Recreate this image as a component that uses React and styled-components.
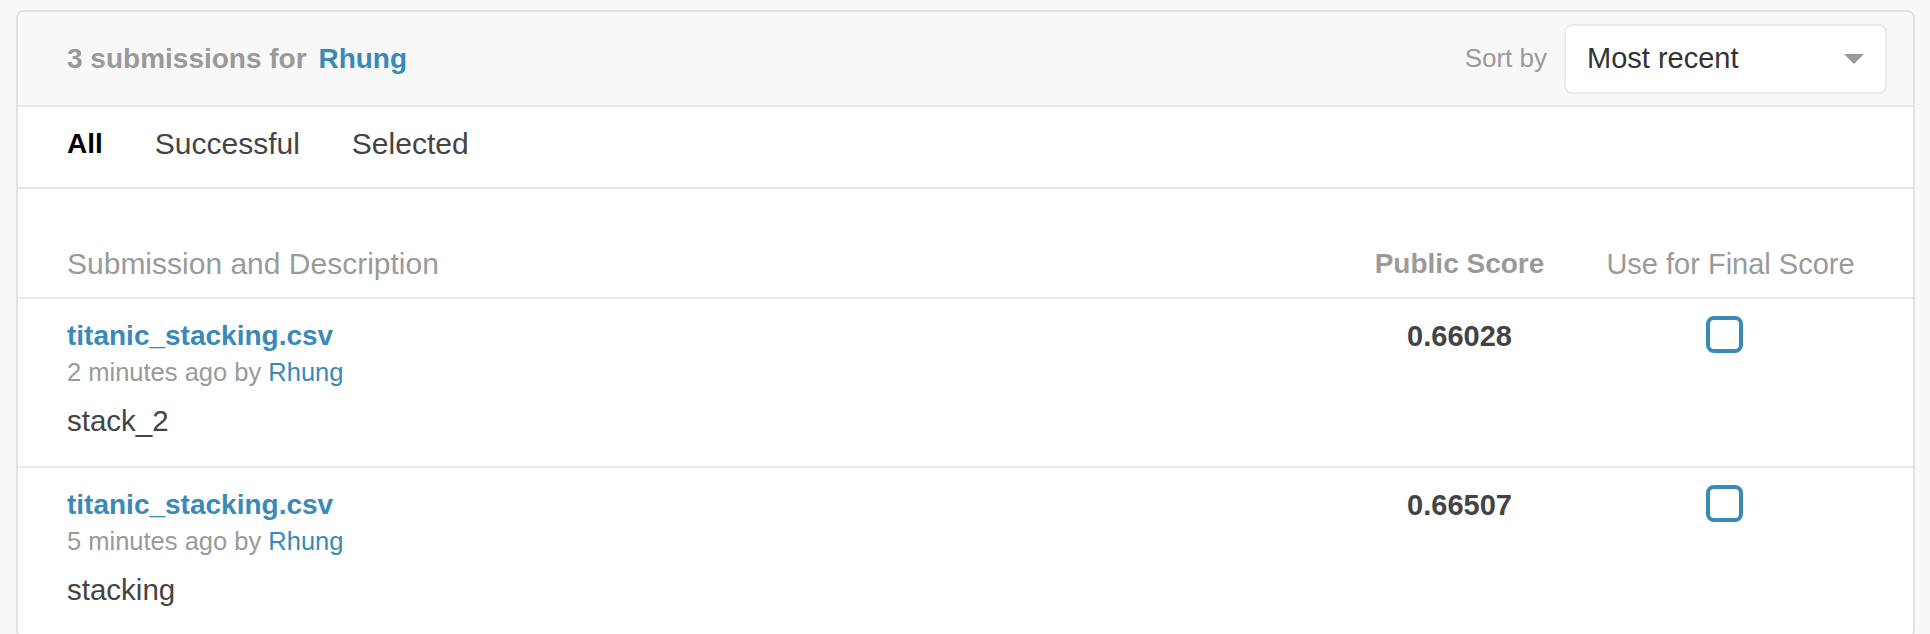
import React from "react";
import styled, { createGlobalStyle } from "styled-components";

const GlobalStyle = createGlobalStyle`
  html, body {
    margin: 0;
    padding: 0;
    background: #f7f8fa;
    overflow: hidden;
    font-family: "Liberation Sans", Arial, sans-serif;
  }
`;

const Card = styled.div`
  margin: 10px 15px 0 16px;
  border: 2px solid #e2e2e2;
  border-radius: 8px;
  background: #fff;
  overflow: hidden;
`;

const Header = styled.div`
  height: 93px;
  display: flex;
  align-items: center;
  justify-content: space-between;
  padding: 0 26px 0 49px;
  background: #f8f8f9;
  border-bottom: 2px solid #e8e8e8;
`;

const Title = styled.div`
  font-size: 28px;
  font-weight: 700;
  color: #9a9a9a;
`;

const Link = styled.a`
  color: #3a89b9;
  font-weight: ${(p) => (p.$regular ? 400 : 700)};
  text-decoration: none;
  margin-left: ${(p) => p.$gap || 0}px;
`;

const SortGroup = styled.div`
  display: flex;
  align-items: center;
  gap: 17px;
`;

const SortLabel = styled.span`
  font-size: 26px;
  color: #9a9a9a;
`;

const Select = styled.div`
  box-sizing: border-box;
  width: 323px;
  height: 70px;
  border: 2px solid #ebebeb;
  border-radius: 8px;
  background: #fff;
  display: flex;
  align-items: center;
  justify-content: space-between;
  padding: 0 21px;
  font-size: 29px;
  color: #333;
`;

const Caret = styled.span`
  width: 0;
  height: 0;
  border-left: 10px solid transparent;
  border-right: 10px solid transparent;
  border-top: 10px solid #999;
`;

const Tabs = styled.div`
  display: flex;
  gap: 52px;
  padding: 19px 49px 25px;
  border-bottom: 2px solid #e6e6e6;
`;

const Tab = styled.span`
  font-size: ${(p) => (p.$active ? 28 : 30)}px;
  line-height: 36px;
  font-weight: ${(p) => (p.$active ? 700 : 400)};
  color: ${(p) => (p.$active ? "#000" : "#444")};
`;

const Grid = styled.div`
  display: grid;
  grid-template-columns: 1fr 171px 251px;
  column-gap: 60px;
  padding: ${(p) => p.$pad};
  border-bottom: 2px solid #ebebeb;
  align-items: ${(p) => p.$align || "start"};
`;

const HeadCell = styled.div`
  font-size: ${(p) => p.$size || 29}px;
  font-weight: ${(p) => (p.$bold ? 700 : 400)};
  line-height: 36px;
  color: #9a9a9a;
  text-align: ${(p) => p.$align || "left"};
`;

const NameCell = styled.div`
  display: flex;
  flex-direction: column;
`;

const FileLink = styled.a`
  font-size: 28px;
  font-weight: 700;
  line-height: 34px;
  color: #3a89b9;
  text-decoration: none;
`;

const Meta = styled.div`
  margin-top: 4px;
  font-size: 25.5px;
  line-height: 30px;
  color: #9a9a9a;
`;

const Description = styled.div`
  margin-top: 16px;
  font-size: 29.5px;
  line-height: 36px;
  color: #444;
`;

const Score = styled.div`
  font-size: 29px;
  font-weight: 700;
  line-height: 34px;
  color: #444;
  text-align: center;
`;

const CheckCell = styled.div`
  display: flex;
  justify-content: center;
  padding-right: 12px;
`;

const Checkbox = styled.span`
  display: block;
  width: 37px;
  height: 37px;
  box-sizing: border-box;
  margin-top: -3px;
  border: 4px solid #3a89b9;
  border-radius: 8px;
  background: #fff;
`;

const submissions = [
  { file: "titanic_stacking.csv", when: "2 minutes ago", desc: "stack_2", score: "0.66028" },
  { file: "titanic_stacking.csv", when: "5 minutes ago", desc: "stacking", score: "0.66507" },
];

export default function App() {
  return (
    <>
      <GlobalStyle />
      <Card>
        <Header>
          <Title>
            3 submissions for <Link $gap={4}>Rhung</Link>
          </Title>
          <SortGroup>
            <SortLabel>Sort by</SortLabel>
            <Select>
              Most recent
              <Caret />
            </Select>
          </SortGroup>
        </Header>
        <Tabs>
          <Tab $active>All</Tab>
          <Tab>Successful</Tab>
          <Tab>Selected</Tab>
        </Tabs>
        <Grid $pad="57px 57px 15px 49px" $align="end">
          <HeadCell $size={30}>Submission and Description</HeadCell>
          <HeadCell $size={28} $bold $align="center">Public Score</HeadCell>
          <HeadCell $align="center">Use for Final Score</HeadCell>
        </Grid>
        {submissions.map((s, i) => (
          <Grid key={i} $pad="20px 57px 27px 49px">
            <NameCell>
              <FileLink>{s.file}</FileLink>
              <Meta>
                {s.when} by <Link $regular>Rhung</Link>
              </Meta>
              <Description>{s.desc}</Description>
            </NameCell>
            <Score>{s.score}</Score>
            <CheckCell>
              <Checkbox />
            </CheckCell>
          </Grid>
        ))}
      </Card>
    </>
  );
}
